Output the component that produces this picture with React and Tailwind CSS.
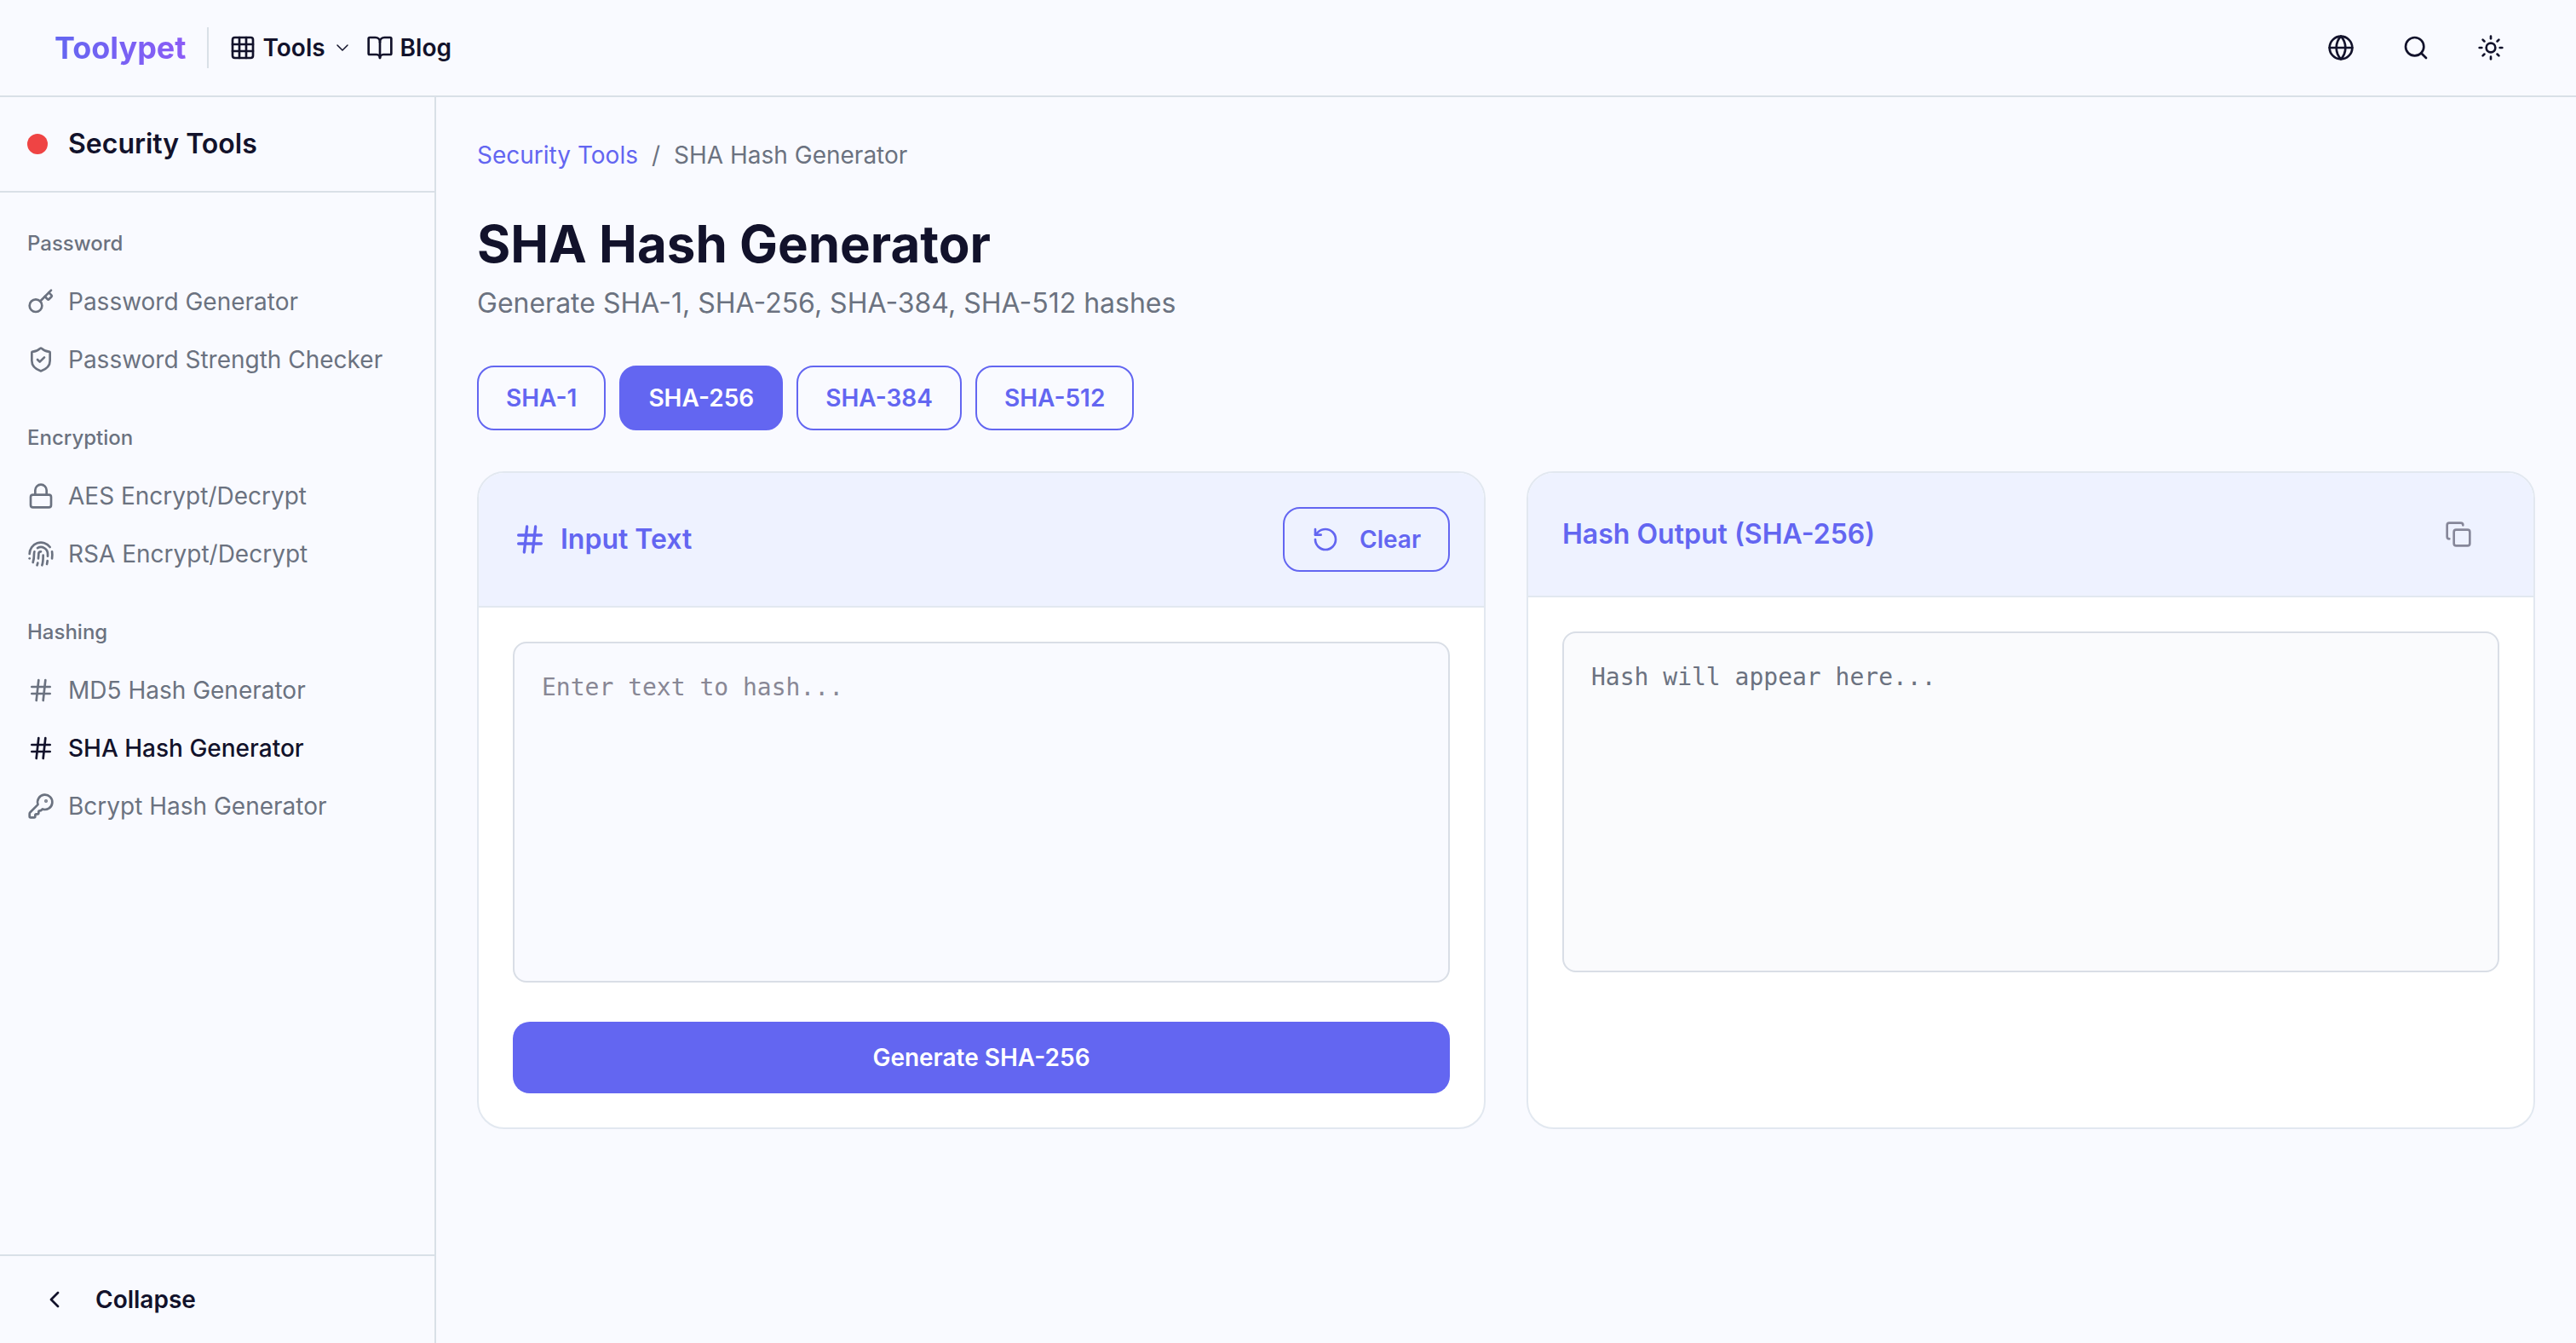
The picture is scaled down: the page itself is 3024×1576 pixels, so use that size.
import { useState } from "react";
import {
  BookOpen,
  ChevronDown,
  ChevronLeft,
  Copy,
  Fingerprint,
  Globe,
  Grid3x3,
  Hash,
  Key,
  KeyRound,
  Lock,
  RotateCcw,
  Search,
  ShieldCheck,
  Sun,
} from "lucide-react";

const ALGORITHMS = ["SHA-1", "SHA-256", "SHA-384", "SHA-512"];

const GROUPS = [
  {
    title: "Password",
    items: [
      { label: "Password Generator", icon: Key },
      { label: "Password Strength Checker", icon: ShieldCheck },
    ],
  },
  {
    title: "Encryption",
    items: [
      { label: "AES Encrypt/Decrypt", icon: Lock },
      { label: "RSA Encrypt/Decrypt", icon: Fingerprint },
    ],
  },
  {
    title: "Hashing",
    items: [
      { label: "MD5 Hash Generator", icon: Hash },
      { label: "SHA Hash Generator", icon: Hash, active: true },
      { label: "Bcrypt Hash Generator", icon: KeyRound },
    ],
  },
];

const HEADER_ACTIONS = [
  { label: "Language", icon: Globe },
  { label: "Search", icon: Search },
  { label: "Toggle theme", icon: Sun },
];

function Header() {
  return (
    <header className="flex h-[114px] shrink-0 items-center justify-between border-b-2 border-[#d9e0e7] px-16">
      <div className="flex items-center">
        <a
          href="#"
          className="bg-gradient-to-r from-[#6366f1] to-[#8b5cf6] bg-clip-text text-[36px] leading-[48px] font-bold text-transparent"
        >
          Toolypet
        </a>
        <span className="mx-6 h-12 w-[2px] bg-[#d9e0e7]" />
        <nav className="flex items-center gap-4 text-[28px] leading-[40px] font-semibold">
          <button type="button" className="flex items-center gap-2">
            <Grid3x3 className="size-8" />
            Tools
            <ChevronDown className="size-6" strokeWidth={1.5} />
          </button>
          <a href="#blog" className="flex items-center gap-2">
            <BookOpen className="size-8" />
            Blog
          </a>
        </nav>
      </div>
      <div className="flex items-center gap-4">
        {HEADER_ACTIONS.map(({ label, icon: Icon }) => (
          <button key={label} type="button" aria-label={label} className="flex size-[72px] items-center justify-center">
            <Icon className="size-8" />
          </button>
        ))}
      </div>
    </header>
  );
}

function Sidebar() {
  return (
    <aside className="flex w-[512px] shrink-0 flex-col border-r-2 border-[#d9e0e7]">
      <div className="flex h-[112px] items-center gap-6 border-b-2 border-[#d9e0e7] px-8">
        <span className="size-6 rounded-full bg-[#ef4444]" />
        <h2 className="text-[32px] leading-[48px] font-semibold">Security Tools</h2>
      </div>

      <nav className="flex flex-1 flex-col gap-8 px-8 pt-[34px] pb-8">
        {GROUPS.map((group) => (
          <div key={group.title}>
            <h3 className="py-2 text-[24px] leading-[36px] font-medium text-[#6b7280]">{group.title}</h3>
            <ul className="pt-2">
              {group.items.map(({ label, icon: Icon, active }) => (
                <li key={label}>
                  <a
                    href="#"
                    className={`flex h-[68px] items-center gap-4 text-[28px] leading-[40px] ${
                      active ? "font-medium text-[#12122b]" : "text-[#6b7280]"
                    }`}
                  >
                    <Icon className="size-8" />
                    {label}
                  </a>
                </li>
              ))}
            </ul>
          </div>
        ))}
      </nav>

      <button
        type="button"
        className="flex h-[104px] items-center gap-8 border-t-2 border-[#d9e0e7] px-12 text-[28px] leading-[40px] font-semibold"
      >
        <ChevronLeft className="size-8" />
        Collapse
      </button>
    </aside>
  );
}

export default function App() {
  const [algorithm, setAlgorithm] = useState("SHA-256");
  const [text, setText] = useState("");

  return (
    <div className="flex min-h-screen flex-col bg-[#f9faff] font-[Inter,sans-serif] text-[#12122b]">
      <Header />
      <div className="flex flex-1">
        <Sidebar />

        <main className="min-w-0 flex-1 p-12">
          <nav aria-label="Breadcrumb" className="flex gap-4 text-[28px] leading-[40px] text-[#6b7280]">
            <a href="#" className="text-[#6366f1]">
              Security Tools
            </a>
            <span>/</span>
            <span>SHA Hash Generator</span>
          </nav>

          <h1 className="mt-12 text-[60px] leading-[72px] font-bold">SHA Hash Generator</h1>
          <p className="mt-2 text-[32px] leading-[51px] text-[#6b7280]">
            Generate SHA-1, SHA-256, SHA-384, SHA-512 hashes
          </p>

          {/* Algorithm picker */}
          <div className="mt-12 flex gap-4">
            {ALGORITHMS.map((name) => (
              <button
                key={name}
                type="button"
                onClick={() => setAlgorithm(name)}
                className={`h-[76px] rounded-[20px] border-2 border-[#6366f1] px-8 text-[28px] leading-[40px] font-semibold ${
                  name === algorithm ? "bg-[#6366f1] text-white" : "text-[#6366f1]"
                }`}
              >
                {name}
              </button>
            ))}
          </div>

          <div className="mt-12 grid grid-cols-2 gap-12">
            <section className="overflow-hidden rounded-[32px] border-2 border-[#e2e8f0] bg-white">
              <div className="flex items-center justify-between border-b-2 border-[#e2e8f0] bg-[#eef2ff] p-10 text-[#6366f1]">
                <label htmlFor="hash-input" className="flex items-center gap-4 text-[32px] leading-[48px] font-semibold">
                  <Hash className="size-10" />
                  Input Text
                </label>
                <button
                  type="button"
                  onClick={() => setText("")}
                  className="flex h-[76px] items-center gap-6 rounded-[20px] border-2 border-[#6366f1] px-8 text-[28px] leading-[40px] font-semibold"
                >
                  <RotateCcw className="size-8" />
                  Clear
                </button>
              </div>
              <div className="p-10">
                <textarea
                  id="hash-input"
                  value={text}
                  onChange={(e) => setText(e.target.value)}
                  placeholder="Enter text to hash..."
                  className="block h-[400px] w-full resize-none rounded-[16px] border-2 border-[#d9dee6] bg-[#f9faff] p-8 font-['DejaVu_Sans_Mono',monospace] text-[28px] leading-[40px] placeholder:text-[#888795]"
                />
                <button
                  type="button"
                  className="mt-[46px] h-[84px] w-full rounded-[20px] bg-[#6366f1] text-[28px] leading-[40px] font-semibold text-white"
                >
                  Generate {algorithm}
                </button>
              </div>
            </section>

            <section className="overflow-hidden rounded-[32px] border-2 border-[#e2e8f0] bg-white">
              <div className="flex items-center justify-between border-b-2 border-[#e2e8f0] bg-[#eef2ff] p-10">
                <h2 className="text-[32px] leading-[48px] font-semibold text-[#6366f1]">Hash Output ({algorithm})</h2>
                <button
                  type="button"
                  aria-label="Copy hash"
                  className="flex h-16 w-24 items-center justify-center text-[#868799]"
                >
                  <Copy className="size-8" />
                </button>
              </div>
              <div className="p-10">
                <div className="h-[400px] rounded-[16px] border-2 border-[#d9dee6] bg-[#fafbfd] p-8 font-['DejaVu_Sans_Mono',monospace] text-[28px] leading-[40px] text-[#6b7280]">
                  Hash will appear here...
                </div>
              </div>
            </section>
          </div>
        </main>
      </div>
    </div>
  );
}
